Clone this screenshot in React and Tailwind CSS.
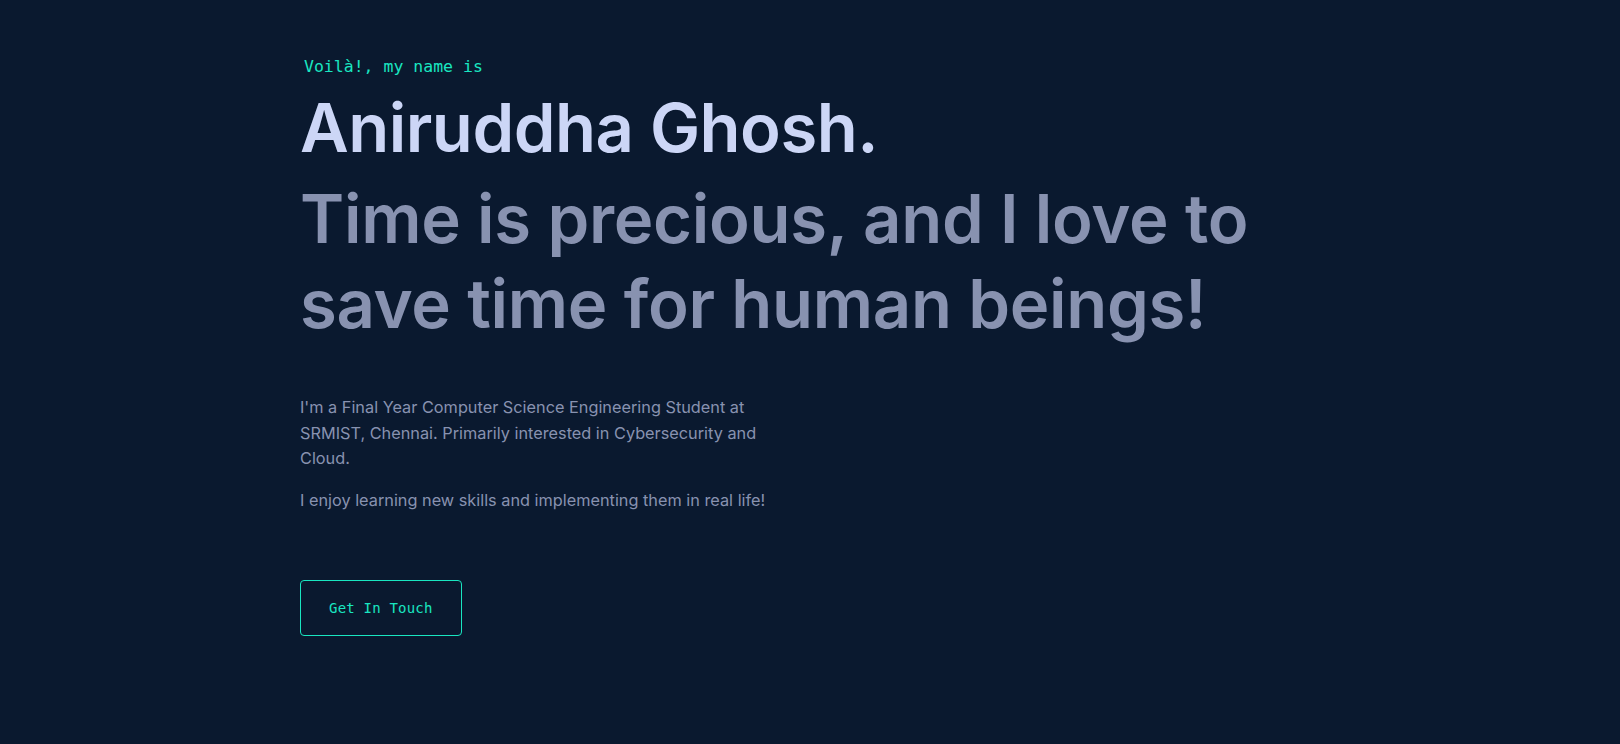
import React from "react";

export default function App() {
  return (
    <div className="min-h-screen w-full bg-[#0a192f]">
      <main className="mx-auto w-full max-w-[1020px] pt-[55px] pb-[100px]">
        <section className="flex flex-col items-start">
          <h1 className="ml-1 mb-[12px] font-['DejaVu_Sans_Mono',monospace] text-[16.5px] leading-6 font-normal text-[#19e6c1]">
            Voilà!, my name is
          </h1>
          <h2 className="font-['Inter',sans-serif] text-[67px] leading-[74px] font-semibold tracking-[-0.5px] text-[#ccd6f6]">
            Aniruddha Ghosh.
          </h2>
          <h3 className="mt-[11px] font-['Inter',sans-serif] text-[67px] leading-[85px] font-semibold tracking-[-0.3px] text-[#8892b0]">
            Time is precious, and I love to
            <br />
            save time for human beings!
          </h3>
          <div className="mt-[49px] max-w-[480px] font-['Inter',sans-serif] text-[16.3px] leading-[25.5px] text-[#8892b0]">
            <p>
              I'm a Final Year Computer Science Engineering Student at SRMIST, Chennai. Primarily interested in Cybersecurity and Cloud.
            </p>
            <p className="mt-4">I enjoy learning new skills and implementing them in real life!</p>
          </div>
          <a
            href="#contact"
            className="mt-[67px] inline-block rounded-[4px] border border-[#19e6c1] px-[28px] py-[20px] font-['DejaVu_Sans_Mono',monospace] text-[14px] leading-[14px] tracking-[0.2px] text-[#19e6c1] no-underline"
          >
            Get In Touch
          </a>
        </section>
      </main>
    </div>
  );
}
